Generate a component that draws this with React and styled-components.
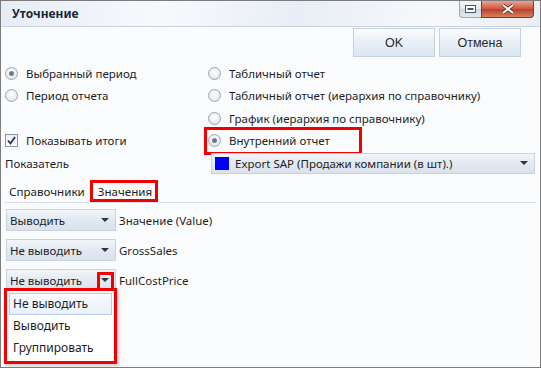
import React from 'react'
import styled, { createGlobalStyle } from 'styled-components'

const Global = createGlobalStyle`
  html, body { margin: 0; padding: 0; background: #fff; }
  body { font-family: "Noto Sans", "Open Sans", sans-serif; font-size: 11.5px; color: #1e1e1e; }
  * { box-sizing: border-box; }
`

const Window = styled.div`
  width: 541px;
  height: 368px;
  border: 1px solid #7c7c7c;
  background: #fafbfc;
  display: flex;
  flex-direction: column;
  position: relative;
  overflow: hidden;
`

const TitleBar = styled.div`
  height: 26px;
  flex: none;
  display: flex;
  align-items: flex-start;
  padding-left: 11px;
  padding-right: 6px;
  background: linear-gradient(100deg, #e6edf6 0%, #f7f9fc 30%, #e8eef6 55%, #f6f8fb 80%, #e9eef5 100%);
  border-bottom: 1px solid #c9d3df;
`

const Title = styled.div`
  flex: 1;
  font-weight: bold;
  font-size: 12px;
  line-height: 26px;
  color: #1b2636;
`

const MinBtn = styled.div`
  flex: none;
  width: 22px;
  height: 17px;
  display: flex;
  align-items: center;
  justify-content: center;
  border: 1px solid #9aa6b6;
  border-top: 0;
  border-right: 0;
  border-radius: 0 0 0 4px;
  background: linear-gradient(#f3f6fa, #dfe6ef 50%, #cfd8e4 52%, #e3e9f0);
`

const CloseBtn = styled.div`
  flex: none;
  width: 53px;
  height: 17px;
  display: flex;
  align-items: center;
  justify-content: center;
  border: 1px solid #8e3424;
  border-top: 0;
  border-radius: 0 0 4px 0;
  background-color: #c4503a;
  background-image: linear-gradient(#e9a592, #cd5a42 48%, #b9412b 52%, #d8805f);
`

const Body = styled.div`
  flex: 1;
  display: flex;
  flex-direction: column;
  padding: 0 4px;
`

const Toolbar = styled.div`
  display: flex;
  justify-content: flex-end;
  gap: 4px;
  padding: 1px 15px 0 0;
`

const Button = styled.div`
  width: 82px;
  height: 29px;
  display: flex;
  align-items: center;
  justify-content: center;
  border: 1px solid #c3d0e2;
  background: linear-gradient(#fbfcfe, #e9eff7 50%, #dce5f1 100%);
  font-family: "Liberation Sans", Arial, sans-serif;
  font-size: 12.5px;
  color: #2a2a2a;
`

const Options = styled.div`
  display: grid;
  grid-template-columns: 203px 1fr;
  grid-template-rows: repeat(4, 22.5px) 22px;
  margin-top: 5px;
  align-items: center;
`

const Option = styled.div`
  display: flex;
  align-items: center;
  gap: 7px;
  height: 22px;
  white-space: nowrap;
  position: relative;
`

const Radio = styled.span`
  width: 13px;
  height: 13px;
  border-radius: 50%;
  border: 1px solid #9da6b1;
  background: radial-gradient(circle at 50% 40%, #ffffff 0%, #e9ecef 60%, #d3d8de 100%);
  display: flex;
  align-items: center;
  justify-content: center;
  flex: none;
  &::after {
    content: '';
    width: 5px;
    height: 5px;
    border-radius: 50%;
    background: ${p => (p.$on ? 'radial-gradient(#5a6b80, #8896a8)' : 'transparent')};
  }
`

const Check = styled.span`
  width: 13px;
  height: 13px;
  border: 1px solid #8a96a4;
  background: linear-gradient(#e9edf2, #ffffff);
  display: flex;
  align-items: center;
  justify-content: center;
  flex: none;
`

const Mark = styled.div`
  position: absolute;
  border: 3px solid #f00000;
  pointer-events: none;
`

const Label = styled.span`
  padding-left: 1px;
`

const Select = styled.div`
  height: ${p => p.$h || 22}px;
  width: ${p => p.$w || '100%'};
  display: flex;
  align-items: center;
  padding: 0 6px 0 3px;
  gap: 6px;
  border: 1px solid #c6d2e2;
  background: linear-gradient(#f2f5f9, #e3e9f1 50%, #dae2ed);
  position: relative;
  white-space: nowrap;
`

const Arrow = styled.span`
  margin-left: auto;
  width: 0;
  height: 0;
  border-left: 4px solid transparent;
  border-right: 4px solid transparent;
  border-top: 4px solid #2d3642;
`

const Swatch = styled.span`
  width: 14px;
  height: 13px;
  background: #0000ff;
  flex: none;
`

const Tabs = styled.div`
  display: flex;
  margin-top: 8px;
  height: 21px;
  border-bottom: 1px solid #d6dde7;
  padding-left: 3px;
  position: relative;
`

const Tab = styled.div`
  padding: 0 6px 0 ${p => (p.$active ? '7px' : '1px')};
  line-height: 20px;
  font-size: 11.6px;
  position: relative;
`

const Rows = styled.div`
  display: flex;
  flex-direction: column;
  gap: 8px;
  padding-top: 6px;
  padding-left: 1px;
`

const Row = styled.div`
  display: flex;
  align-items: center;
  gap: 3px;
  position: relative;
`

const Popup = styled.div`
  position: absolute;
  left: 3px;
  top: 287px;
  width: 113px;
  height: 76px;
  border: 3px solid #f00000;
  background: #fff;
  box-shadow: 2px 2px 3px rgba(0, 0, 0, 0.2);
  padding: 2px 2px;
  display: flex;
  flex-direction: column;
`

const Item = styled.div`
  height: 22px;
  line-height: 20px;
  padding-left: 3px;
  border: 1px solid ${p => (p.$hot ? '#b7cdea' : 'transparent')};
  background: ${p => (p.$hot ? 'linear-gradient(#f7fafe, #e9f1fb)' : 'transparent')};
  font-size: 12px;
`

const rows = [
  { value: 'Выводить', name: 'Значение (Value)' },
  { value: 'Не выводить', name: 'GrossSales' },
  { value: 'Не выводить', name: 'FullCostPrice', open: true },
]

export default function App() {
  return (
    <>
      <Global />
      <Window>
        <TitleBar>
          <Title>Уточнение</Title>
          <MinBtn>
            <svg width="11" height="8" viewBox="0 0 11 8">
              <rect x="0.5" y="0.5" width="10" height="7" fill="#fff" stroke="#4c5766" />
              <rect x="2.5" y="3" width="6" height="2" fill="#4c5766" />
            </svg>
          </MinBtn>
          <CloseBtn>
            <svg width="14" height="10" viewBox="0 0 14 10">
              <path d="M2 1 L12 9 M12 1 L2 9" stroke="#5b1e12" strokeWidth="3.4" />
              <path d="M2 1 L12 9 M12 1 L2 9" stroke="#fff" strokeWidth="2" />
            </svg>
          </CloseBtn>
        </TitleBar>
        <Body>
          <Toolbar>
            <Button>OK</Button>
            <Button>Отмена</Button>
          </Toolbar>
          <Options>
            <Option><Radio $on /><Label>Выбранный период</Label></Option>
            <Option><Radio /><Label>Табличный отчет</Label></Option>
            <Option><Radio /><Label>Период отчета</Label></Option>
            <Option><Radio /><Label>Табличный отчет (иерархия по справочнику)</Label></Option>
            <div />
            <Option><Radio /><Label>График (иерархия по справочнику)</Label></Option>
            <Option>
              <Check>
                <svg width="9" height="9" viewBox="0 0 9 9">
                  <path d="M1 4.5 L3.5 7.5 L8 1" fill="none" stroke="#25364c" strokeWidth="1.8" />
                </svg>
              </Check>
              <Label>Показывать итоги</Label>
            </Option>
            <Option>
              <Radio $on /><Label>Внутренний отчет</Label>
              <Mark style={{ left: -4, top: -3, width: 158, height: 28 }} />
            </Option>
            <Option>Показатель</Option>
            <Select $h={21} style={{ marginLeft: 3, width: 324 }}>
              <Swatch />
              <span>Export SAP (Продажи компании (в шт).)</span>
              <Arrow />
            </Select>
          </Options>
          <Tabs>
            <Tab>Справочники</Tab>
            <Tab $active>
              Значения
              <Mark style={{ left: -1, top: -2, width: 68, height: 22 }} />
            </Tab>
          </Tabs>
          <Rows>
            {rows.map((r, i) => (
              <Row key={i}>
                <Select $w="110px">
                  <span>{r.value}</span>
                  <Arrow />
                  {r.open && <Mark style={{ right: 1, top: 2, width: 17, height: 20 }} />}
                </Select>
                <span>{r.name}</span>
              </Row>
            ))}
          </Rows>
        </Body>
        <Popup>
          <Item $hot>Не выводить</Item>
          <Item>Выводить</Item>
          <Item>Группировать</Item>
        </Popup>
      </Window>
    </>
  )
}
